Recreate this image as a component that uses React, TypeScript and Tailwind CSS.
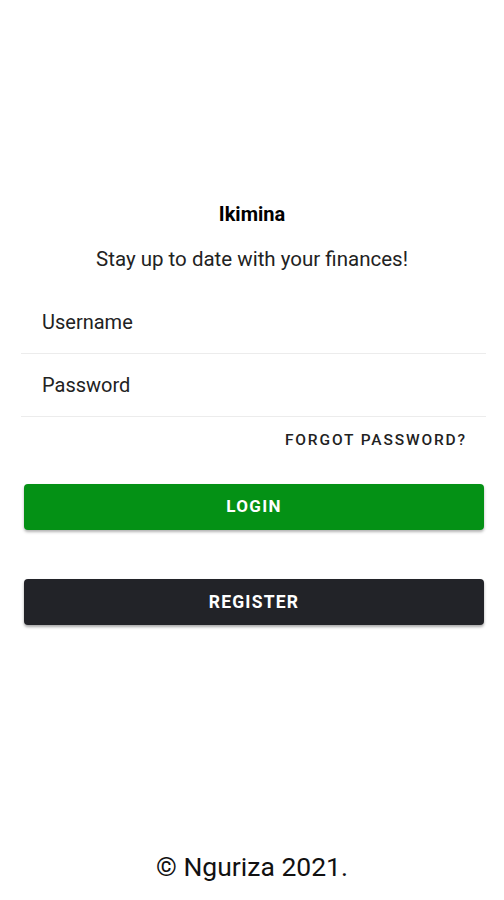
import React from "react";

export default function App() {
  return (
    <div
      className="w-[504px] min-h-[900px] bg-white flex flex-col text-[#1a1a1a]"
      style={{ fontFamily: "Roboto, 'Noto Sans', sans-serif" }}
    >
      <div className="pt-[200px] flex flex-col items-center">
        <div className="text-[20px] leading-[28px] font-bold text-black">Ikimina</div>
        <div className="mt-[17px] text-[20.5px] leading-[28px] text-[#222]">
          Stay up to date with your finances!
        </div>
      </div>
      <div className="mt-[18px] ml-[21px] mr-[18px] flex flex-col">
        <div className="h-[63px] flex items-center pl-[21px] border-b border-[#ececec] text-[20px] text-[#222]">
          Username
        </div>
        <div className="h-[63px] flex items-center pl-[21px] border-b border-[#ececec] text-[20px] text-[#222]">
          Password
        </div>
      </div>
      <div className="mt-[12px] flex justify-end pr-[37px]">
        <span className="text-[15.5px] leading-[22px] font-medium tracking-[0.12em] text-[#222]">
          FORGOT PASSWORD?
        </span>
      </div>
      <div className="mt-[33px] ml-[24px] mr-[20px] flex flex-col gap-[49px]">
        <button className="h-[46px] rounded-[4px] bg-[#049115] text-white text-[17px] font-bold tracking-[0.08em] shadow-[0_2px_3px_rgba(0,0,0,0.3)]">
          LOGIN
        </button>
        <button className="h-[46px] rounded-[4px] bg-[#222328] text-white text-[17.5px] font-bold tracking-[0.07em] shadow-[0_2px_3px_rgba(0,0,0,0.35)]">
          REGISTER
        </button>
      </div>
      <div className="mt-[226px] text-center text-[26.5px] leading-[32px] text-[#111]">
        © Nguriza 2021.
      </div>
    </div>
  );
}
